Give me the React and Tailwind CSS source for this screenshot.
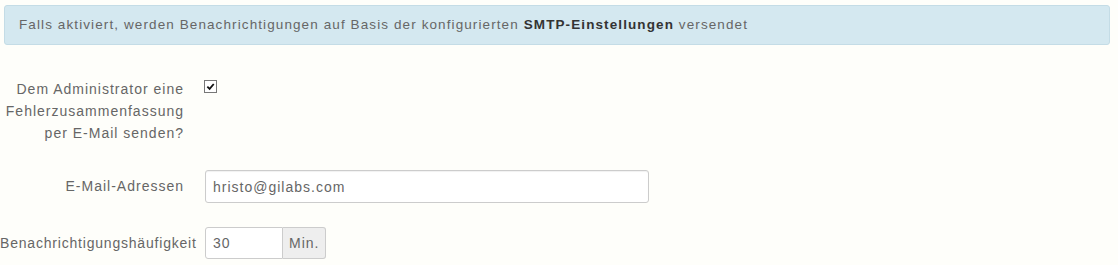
import React, { useState } from "react";

const font = { fontFamily: '"Liberation Sans", Arial, sans-serif' };

export default function App() {
  const [checked, setChecked] = useState(true);
  const [email, setEmail] = useState("hristo@gilabs.com");
  const [freq, setFreq] = useState("30");

  return (
    <div className="w-[1118px] h-[265px] bg-[#fefefa] text-[#666] text-[14px] tracking-[1px] pt-[5px] px-[4px]" style={font}>
      {/* info alert */}
      <div className="h-[40px] mr-[4px] bg-[#d4e8f0] border border-[#c4dce6] rounded-[3px] flex items-center pl-[14px] text-[13.5px] tracking-[1.1px] text-[#666]">
        <span>
          Falls aktiviert, werden Benachrichtigungen auf Basis der konfigurierten{" "}
          <b className="text-[#333]">SMTP-Einstellungen</b> versendet
        </span>
      </div>

      <div className="-ml-[4px] mt-[33px] flex flex-col">
        {/* checkbox row */}
        <div className="flex items-start">
          <div className="w-[184px] shrink-0 text-right leading-[22px] whitespace-nowrap">
            Dem Administrator eine
            <br />
            Fehlerzusammenfassung
            <br />
            per E-Mail senden?
          </div>
          <label className="ml-[20px] mt-[2px] w-[13px] h-[13px] border border-[#777] bg-white flex items-center justify-center cursor-pointer">
            <input type="checkbox" className="hidden" checked={checked} onChange={(e) => setChecked(e.target.checked)} />
            {checked && (
              <svg width="9" height="9" viewBox="0 0 10 10">
                <path d="M1.5 5.2 L4 7.6 L8.6 2.2" fill="none" stroke="#111" strokeWidth="2" />
              </svg>
            )}
          </label>
        </div>

        {/* email row */}
        <div className="flex items-center mt-[26px]">
          <div className="w-[184px] shrink-0 text-right">E-Mail-Adressen</div>
          <input
            value={email}
            onChange={(e) => setEmail(e.target.value)}
            className="ml-[21px] w-[444px] h-[33px] px-[7px] bg-white border border-[#ccc] rounded-[3px] text-[14px] text-[#666] tracking-[1px] outline-none shadow-[inset_0_1px_1px_rgba(0,0,0,0.06)]"
            style={font}
          />
        </div>

        {/* frequency row */}
        <div className="flex items-center mt-[24px]">
          <div className="w-[184px] shrink-0 whitespace-nowrap">
            <span className="inline-block tracking-[0.8px]">Benachrichtigungshäufigkeit</span>
          </div>
          <div className="ml-[21px] flex h-[32px]">
            <input
              value={freq}
              onChange={(e) => setFreq(e.target.value)}
              className="w-[78px] h-full px-[7px] bg-white border border-[#ccc] rounded-l-[3px] text-[14px] text-[#666] tracking-[1px] outline-none"
              style={font}
            />
            <span className="h-full px-[6px] flex items-center bg-[#eee] border border-l-0 border-[#ccc] rounded-r-[3px] text-[#666]">
              Min.
            </span>
          </div>
        </div>
      </div>
    </div>
  );
}
